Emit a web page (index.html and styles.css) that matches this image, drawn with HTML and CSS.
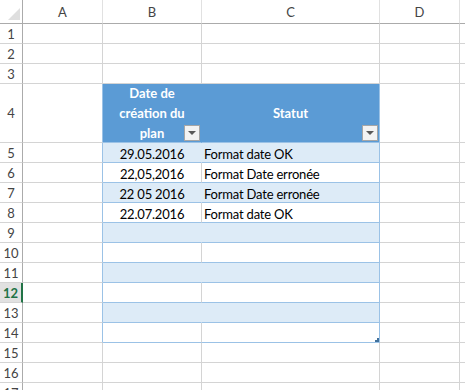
FILE: index.html
```html
<!DOCTYPE html>
<html lang="fr">
<head>
    <meta charset="UTF-8">
    <title>Classeur</title>
    <link rel="stylesheet" href="styles.css">
</head>
<body>
    <div class="sheet">
        <div class="row heads">
            <div class="cell rh corner"><span class="tri"></span></div>
            <div class="cell a">A</div>
            <div class="cell b">B</div>
            <div class="cell c">C</div>
            <div class="cell d">D</div>
            <div class="cell e"></div>
        </div>
        <div class="row"><div class="cell rh">1</div><div class="cell a"></div><div class="cell b"></div><div class="cell c"></div><div class="cell d"></div><div class="cell e"></div></div>
        <div class="row"><div class="cell rh">2</div><div class="cell a"></div><div class="cell b"></div><div class="cell c"></div><div class="cell d"></div><div class="cell e"></div></div>
        <div class="row"><div class="cell rh">3</div><div class="cell a"></div><div class="cell b"></div><div class="cell c"></div><div class="cell d"></div><div class="cell e"></div></div>
        <div class="row tall">
            <div class="cell rh">4</div>
            <div class="cell a edge"></div>
            <div class="cell b th">Date de<br>création du<br>plan<span class="filter"></span></div>
            <div class="cell c th">Statut<span class="filter"></span></div>
            <div class="cell d"></div>
            <div class="cell e"></div>
        </div>
        <div class="row"><div class="cell rh">5</div><div class="cell a edge"></div><div class="cell b t band">29.05.2016</div><div class="cell c t band">Format date OK</div><div class="cell d"></div><div class="cell e"></div></div>
        <div class="row"><div class="cell rh">6</div><div class="cell a edge"></div><div class="cell b t">22,05,2016</div><div class="cell c t">Format Date erronée</div><div class="cell d"></div><div class="cell e"></div></div>
        <div class="row"><div class="cell rh">7</div><div class="cell a edge"></div><div class="cell b t band">22 05 2016</div><div class="cell c t band">Format Date erronée</div><div class="cell d"></div><div class="cell e"></div></div>
        <div class="row"><div class="cell rh">8</div><div class="cell a edge"></div><div class="cell b t">22.07.2016</div><div class="cell c t">Format date OK</div><div class="cell d"></div><div class="cell e"></div></div>
        <div class="row"><div class="cell rh">9</div><div class="cell a edge"></div><div class="cell b t band"></div><div class="cell c t band"></div><div class="cell d"></div><div class="cell e"></div></div>
        <div class="row"><div class="cell rh">10</div><div class="cell a edge"></div><div class="cell b t"></div><div class="cell c t"></div><div class="cell d"></div><div class="cell e"></div></div>
        <div class="row"><div class="cell rh">11</div><div class="cell a edge"></div><div class="cell b t band"></div><div class="cell c t band"></div><div class="cell d"></div><div class="cell e"></div></div>
        <div class="row"><div class="cell rh sel">12</div><div class="cell a edge"></div><div class="cell b t"></div><div class="cell c t"></div><div class="cell d"></div><div class="cell e"></div></div>
        <div class="row"><div class="cell rh">13</div><div class="cell a edge"></div><div class="cell b t band"></div><div class="cell c t band"></div><div class="cell d"></div><div class="cell e"></div></div>
        <div class="row"><div class="cell rh">14</div><div class="cell a edge"></div><div class="cell b t"></div><div class="cell c t"><svg class="resize" width="4" height="4" viewBox="0 0 4 4"><rect x="2" y="0" width="2" height="4"/><rect x="0" y="2" width="4" height="2"/></svg></div><div class="cell d"></div><div class="cell e"></div></div>
        <div class="row"><div class="cell rh">15</div><div class="cell a"></div><div class="cell b"></div><div class="cell c"></div><div class="cell d"></div><div class="cell e"></div></div>
        <div class="row"><div class="cell rh">16</div><div class="cell a"></div><div class="cell b"></div><div class="cell c"></div><div class="cell d"></div><div class="cell e"></div></div>
        <div class="row"><div class="cell rh">17</div><div class="cell a"></div><div class="cell b"></div><div class="cell c"></div><div class="cell d"></div><div class="cell e"></div></div>
    </div>
</body>
</html>
```

FILE: styles.css
```css
body {
    margin: 0;
    font-family: Lato, "Open Sans", sans-serif;
    font-size: 13px;
    color: #000;
    background: #fff;
    overflow: hidden;
}
.sheet {
    width: 465px;
}
.row {
    display: flex;
    height: 20px;
}
.row.heads {
    height: 24px;
}
.row.tall {
    height: 59px;
}
.cell {
    box-sizing: border-box;
    flex: none;
    display: flex;
    align-items: flex-end;
    padding: 0 2px;
    line-height: 16px;
    white-space: nowrap;
    border-right: 1px solid #d4d4d4;
    border-bottom: 1px solid #d4d4d4;
}
.rh { width: 23px; }
.a { width: 80px; }
.b { width: 99px; justify-content: center; }
.c { width: 178px; }
.d { width: 80px; }
.e { flex: 1; border-right: none; }

/* en-tetes de colonnes et de lignes */
.heads .cell {
    align-items: center;
    justify-content: center;
    color: #444;
    border-bottom-color: #ababab;
    border-right-color: #e1e1e1;
}
.rh {
    justify-content: center;
    align-items: center;
    padding: 0;
    color: #444;
    border-right-color: #ababab;
}
.heads .corner {
    align-items: flex-end;
    justify-content: flex-end;
    padding: 0 2px 3px 0;
    border-right-color: #ababab;
}
.tri {
    width: 0;
    height: 0;
    border-left: 12px solid transparent;
    border-bottom: 12px solid #dfdfdf;
}
.rh.sel {
    background: #e1e1e1;
    color: #217346;
    font-weight: bold;
    border-right: 2px solid #217346;
}

/* tableau */
.edge {
    border-right-color: #9bc2e6;
}
.t {
    letter-spacing: -0.2px;
    border-bottom-color: #9bc2e6;
}
.th {
    position: relative;
    background: #5b9bd5;
    color: #fff;
    font-weight: bold;
    text-align: center;
    justify-content: center;
    align-items: center;
    line-height: 20px;
    border-bottom-color: #9bc2e6;
}
.b.th {
    border-right-color: #5b9bd5;
}
.c.th {
    border-right-color: #9bc2e6;
}
.filter {
    position: absolute;
    right: 1px;
    bottom: 1px;
    box-sizing: border-box;
    width: 16px;
    height: 16px;
    background: #f3f3f3;
    border: 1px solid #a6a6a6;
    display: flex;
    align-items: center;
    justify-content: center;
}
.filter::after {
    content: "";
    border-left: 4px solid transparent;
    border-right: 4px solid transparent;
    border-top: 4px solid #595959;
}
.t.band {
    background: #ddebf7;
}
.b.t.band {
    border-right-color: #ddebf7;
}
.c.t {
    position: relative;
    border-right-color: #9bc2e6;
}
.resize {
    position: absolute;
    right: 0;
    bottom: 0;
    fill: #41719c;
}
```
